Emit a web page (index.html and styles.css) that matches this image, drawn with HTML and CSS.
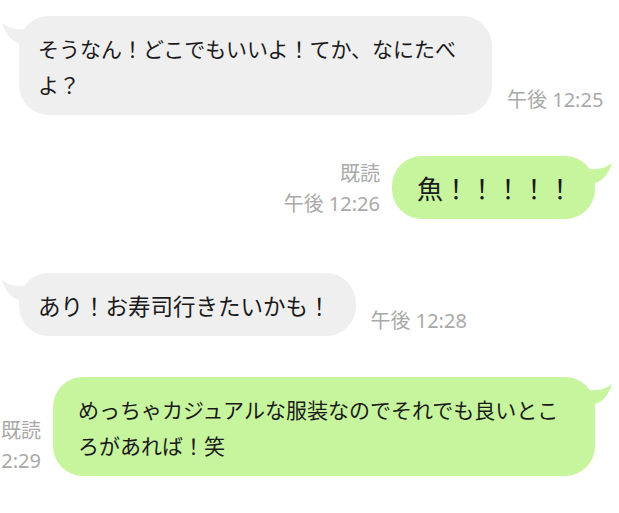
FILE: index.html
```html
<!DOCTYPE html>
<html lang="ja">
<head>
  <meta charset="UTF-8" />
  <meta name="viewport" content="width=device-width, initial-scale=1.0" />
  <title>トーク</title>
  <link rel="stylesheet" href="styles.css">
</head>
<body>

  <div class="chat">

    <div class="msg in">
      <div class="bubble">
        そうなん！どこでもいいよ！てか、なにたべよ？
        <svg class="tail" viewBox="-18 0 28 32" width="28" height="32"><path d="M-17,7 C-11,12 -3,14 6,13 L10,13 L10,32 L0,32 L0,27 C-8,25 -14,17 -17,7 Z"/></svg>
      </div>
      <div class="meta"><span>午後 12:25</span></div>
    </div>

    <div class="msg out">
      <div class="meta"><span>既読</span><span>午後 12:26</span></div>
      <div class="bubble big">
        魚！！！！！
        <svg class="tail" viewBox="-18 0 28 32" width="28" height="32"><path d="M-17,7 C-11,12 -3,14 6,13 L10,13 L10,32 L0,32 L0,27 C-8,25 -14,17 -17,7 Z"/></svg>
      </div>
    </div>

    <div class="msg in">
      <div class="bubble wide">
        あり！お寿司行きたいかも！
        <svg class="tail" viewBox="-18 0 28 32" width="28" height="32"><path d="M-17,7 C-11,12 -3,14 6,13 L10,13 L10,32 L0,32 L0,27 C-8,25 -14,17 -17,7 Z"/></svg>
      </div>
      <div class="meta"><span>午後 12:28</span></div>
    </div>

    <div class="msg out">
      <div class="meta"><span>既読</span><span>午後 12:29</span></div>
      <div class="bubble">
        めっちゃカジュアルな服装なのでそれでも良いところがあれば！笑
        <svg class="tail" viewBox="-18 0 28 32" width="28" height="32"><path d="M-17,7 C-11,12 -3,14 6,13 L10,13 L10,32 L0,32 L0,27 C-8,25 -14,17 -17,7 Z"/></svg>
      </div>
    </div>

  </div>

</body>
</html>
```

FILE: styles.css
```css
* {
  box-sizing: border-box;
}

body {
  margin: 0;
  background: #fff;
  font-family: "Noto Sans CJK JP", sans-serif;
  color: #1a1a1a;
}

.chat {
  display: flex;
  flex-direction: column;
  gap: 41px;
  padding: 16px 24px 0 19px;
}

.msg {
  display: flex;
  align-items: flex-end;
  gap: 15px;
}

.msg.out {
  justify-content: flex-end;
  gap: 12px;
}

.msg.out + .msg.in {
  margin-top: 13px;
}

.bubble {
  position: relative;
  flex-shrink: 0;
  font-size: 21px;
  line-height: 36px;
  padding: 13.5px 25px 13.5px 19px;
  border-radius: 30px;
}

.bubble.big {
  font-size: 26px;
}

.bubble.wide {
  font-size: 22.5px;
}

.msg.in .bubble {
  background: #efefef;
  max-width: 473px;
}

.msg.out .bubble {
  background: #c6f59e;
  max-width: 542px;
  padding: 13.5px 22px 13.5px 25px;
}

.tail {
  position: absolute;
  top: 0;
  left: -18px;
}

.msg.in .tail {
  fill: #efefef;
}

.msg.out .tail {
  left: auto;
  right: -18px;
  transform: scaleX(-1);
  fill: #c6f59e;
}

.meta {
  flex-shrink: 0;
  font-family: "Noto Sans", "Noto Sans CJK JP", sans-serif;
  font-size: 20px;
  line-height: 30px;
  color: #a9a9a9;
  white-space: nowrap;
}

.meta span {
  display: block;
}

.msg.out .meta {
  text-align: right;
}
```
